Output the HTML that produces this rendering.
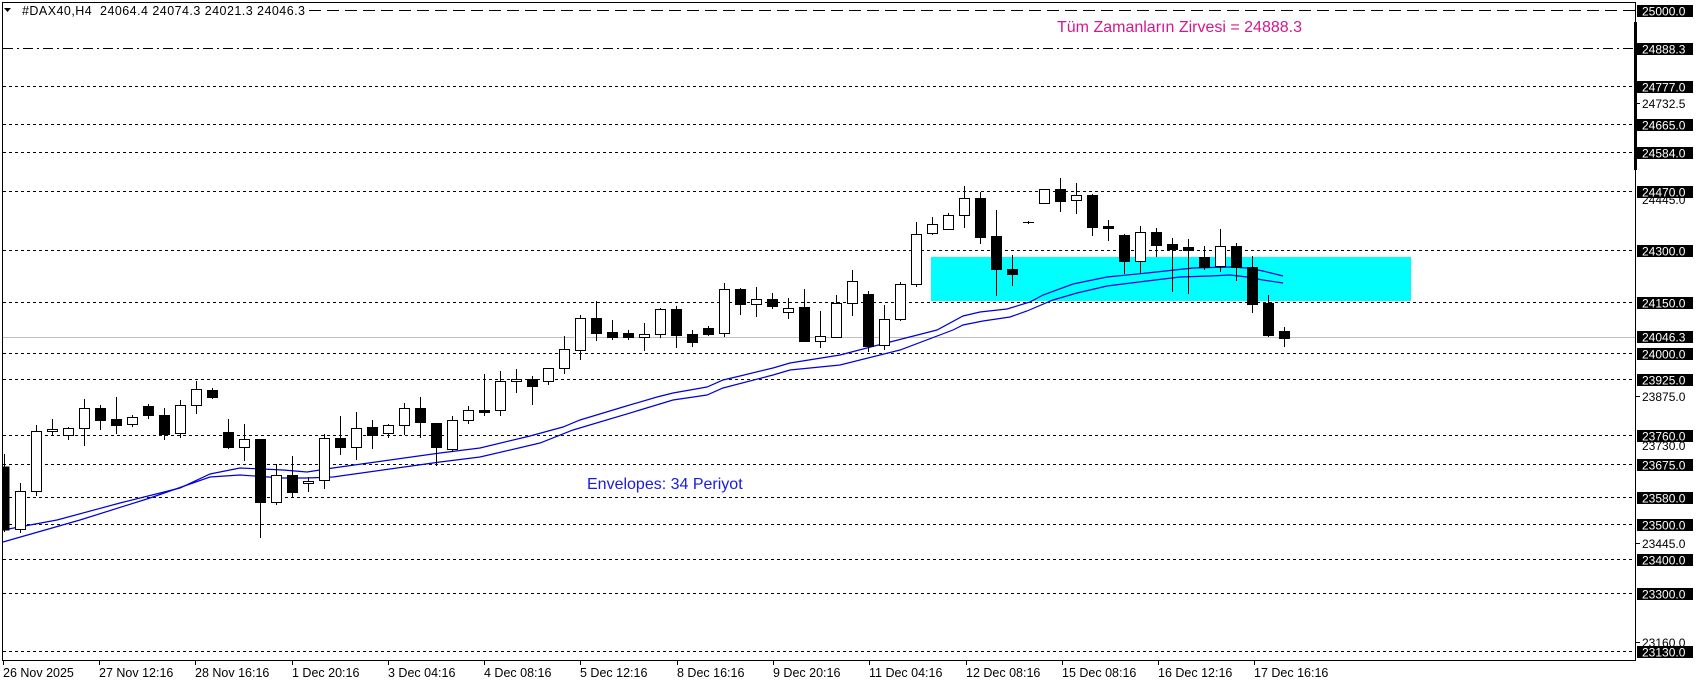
<!DOCTYPE html>
<html><head><meta charset="utf-8"><style>
html,body{margin:0;padding:0;background:#fff;width:1699px;height:684px;overflow:hidden}
svg{display:block}
text{font-family:"Liberation Sans",sans-serif}
</style></head><body>
<svg width="1699" height="684" viewBox="0 0 1699 684" xmlns="http://www.w3.org/2000/svg">
<rect x="0" y="0" width="1699" height="684" fill="#fff"/>
<rect x="931" y="257" width="480" height="44" fill="#00ffff"/>
<g shape-rendering="crispEdges" stroke="#000" stroke-width="1">
<line x1="3" y1="10.5" x2="1635" y2="10.5" stroke-dasharray="12,6"/>
<line x1="3" y1="48.5" x2="1635" y2="48.5" stroke-dasharray="10,4,2,4"/>
<g stroke-dasharray="3,3">
<line x1="3" y1="86.5" x2="1635" y2="86.5"/>
<line x1="3" y1="124.5" x2="1635" y2="124.5"/>
<line x1="3" y1="152.5" x2="1635" y2="152.5"/>
<line x1="3" y1="191.5" x2="1635" y2="191.5"/>
<line x1="3" y1="250.5" x2="1635" y2="250.5"/>
<line x1="3" y1="302.5" x2="1635" y2="302.5"/>
<line x1="3" y1="353.5" x2="1635" y2="353.5"/>
<line x1="3" y1="379.5" x2="1635" y2="379.5"/>
<line x1="3" y1="435.5" x2="1635" y2="435.5"/>
<line x1="3" y1="464.5" x2="1635" y2="464.5"/>
<line x1="3" y1="497.5" x2="1635" y2="497.5"/>
<line x1="3" y1="524.5" x2="1635" y2="524.5"/>
<line x1="3" y1="559.5" x2="1635" y2="559.5"/>
<line x1="3" y1="593.5" x2="1635" y2="593.5"/>
<line x1="3" y1="651.5" x2="1635" y2="651.5"/>
</g>
<line x1="3" y1="337.5" x2="1635" y2="337.5" stroke="#c0c0c0"/>
</g>
<g fill="none" stroke="#0000d8" stroke-width="1.2">
<polyline points="3,530 57,520 120,503 180,488 210,474 240,468 283,470 307,472 333,468 440,453 480,448 530,436 563,427 580,420 623,407 657,397 673,393 707,387 723,380 740,376 773,368 790,363 840,355 890,342 937,330 963,316 980,312 1007,309 1030,302 1043,295 1073,284 1107,277 1147,273 1193,268 1230,267 1247,268 1263,271 1283,276"/>
<polyline points="3,542 80,520 150,498 210,477 240,475 283,478 307,478 333,477 440,462 480,457 540,443 573,430 640,410 673,400 707,395 723,388 773,375 790,370 840,365 900,350 953,330 963,325 983,321 1010,317 1027,311 1053,300 1077,293 1107,286 1147,281 1180,277 1210,276 1230,275 1247,277 1263,280 1283,283"/>
</g>
<g shape-rendering="crispEdges" stroke="#000" stroke-width="1">
<line x1="4.5" y1="454" x2="4.5" y2="532"/><rect x="3" y="467" width="6" height="63" fill="#000"/>
<line x1="20.5" y1="483" x2="20.5" y2="533"/><rect x="15.5" y="491.5" width="10" height="38" fill="#fff"/>
<line x1="36.5" y1="425" x2="36.5" y2="496"/><rect x="31.5" y="431.5" width="10" height="60" fill="#fff"/>
<line x1="52.5" y1="419" x2="52.5" y2="436"/><rect x="47.5" y="429.5" width="10" height="2" fill="#fff"/>
<line x1="68.5" y1="427" x2="68.5" y2="440"/><rect x="63.5" y="428.5" width="10" height="7" fill="#fff"/>
<line x1="84.5" y1="399" x2="84.5" y2="446"/><rect x="79.5" y="408.5" width="10" height="20" fill="#fff"/>
<line x1="100.5" y1="405" x2="100.5" y2="430"/><rect x="95.5" y="408.5" width="10" height="12" fill="#000"/>
<line x1="116.5" y1="397" x2="116.5" y2="434"/><rect x="111.5" y="419.5" width="10" height="6" fill="#000"/>
<line x1="132.5" y1="415" x2="132.5" y2="427"/><rect x="127.5" y="417.5" width="10" height="7" fill="#fff"/>
<line x1="148.5" y1="404" x2="148.5" y2="419"/><rect x="143.5" y="406.5" width="10" height="9" fill="#000"/>
<line x1="164.5" y1="408" x2="164.5" y2="440"/><rect x="159.5" y="415.5" width="10" height="19" fill="#000"/>
<line x1="180.5" y1="400" x2="180.5" y2="438"/><rect x="175.5" y="405.5" width="10" height="28" fill="#fff"/>
<line x1="196.5" y1="381" x2="196.5" y2="414"/><rect x="191.5" y="389.5" width="10" height="16" fill="#fff"/>
<line x1="212.5" y1="388" x2="212.5" y2="399"/><rect x="207.5" y="390.5" width="10" height="7" fill="#000"/>
<line x1="228.5" y1="419" x2="228.5" y2="449"/><rect x="223.5" y="432.5" width="10" height="15" fill="#000"/>
<line x1="244.5" y1="424" x2="244.5" y2="461"/><rect x="239.5" y="439.5" width="10" height="8" fill="#fff"/>
<line x1="260.5" y1="439" x2="260.5" y2="538"/><rect x="255.5" y="439.5" width="10" height="63" fill="#000"/>
<line x1="276.5" y1="464" x2="276.5" y2="505"/><rect x="271.5" y="475.5" width="10" height="27" fill="#fff"/>
<line x1="292.5" y1="456" x2="292.5" y2="497"/><rect x="287.5" y="475.5" width="10" height="17" fill="#000"/>
<line x1="308.5" y1="477" x2="308.5" y2="492"/><rect x="303.5" y="481.5" width="10" height="2" fill="#fff"/>
<line x1="324.5" y1="434" x2="324.5" y2="489"/><rect x="319.5" y="438.5" width="10" height="42" fill="#fff"/>
<line x1="340.5" y1="416" x2="340.5" y2="455"/><rect x="335.5" y="438.5" width="10" height="9" fill="#000"/>
<line x1="356.5" y1="412" x2="356.5" y2="460"/><rect x="351.5" y="428.5" width="10" height="19" fill="#fff"/>
<line x1="372.5" y1="420" x2="372.5" y2="449"/><rect x="367.5" y="427.5" width="10" height="8" fill="#000"/>
<line x1="388.5" y1="424" x2="388.5" y2="438"/><rect x="383.5" y="425.5" width="10" height="8" fill="#fff"/>
<line x1="404.5" y1="403" x2="404.5" y2="435"/><rect x="399.5" y="408.5" width="10" height="17" fill="#fff"/>
<line x1="420.5" y1="397" x2="420.5" y2="438"/><rect x="415.5" y="408.5" width="10" height="14" fill="#000"/>
<line x1="436.5" y1="423" x2="436.5" y2="466"/><rect x="431.5" y="423.5" width="10" height="24" fill="#000"/>
<line x1="452.5" y1="416" x2="452.5" y2="452"/><rect x="447.5" y="420.5" width="10" height="29" fill="#fff"/>
<line x1="468.5" y1="406" x2="468.5" y2="424"/><rect x="463.5" y="410.5" width="10" height="10" fill="#fff"/>
<line x1="484.5" y1="374" x2="484.5" y2="416"/><rect x="479.5" y="410.5" width="10" height="2" fill="#000"/>
<line x1="500.5" y1="371" x2="500.5" y2="416"/><rect x="495.5" y="381.5" width="10" height="29" fill="#fff"/>
<line x1="516.5" y1="369" x2="516.5" y2="393"/><rect x="511.5" y="379.5" width="10" height="2" fill="#fff"/>
<line x1="532.5" y1="376" x2="532.5" y2="405"/><rect x="527.5" y="379.5" width="10" height="7" fill="#000"/>
<line x1="548.5" y1="368" x2="548.5" y2="385"/><rect x="543.5" y="368.5" width="10" height="13" fill="#fff"/>
<line x1="564.5" y1="336" x2="564.5" y2="374"/><rect x="559.5" y="349.5" width="10" height="19" fill="#fff"/>
<line x1="580.5" y1="315" x2="580.5" y2="360"/><rect x="575.5" y="318.5" width="10" height="32" fill="#fff"/>
<line x1="596.5" y1="301" x2="596.5" y2="341"/><rect x="591.5" y="318.5" width="10" height="15" fill="#000"/>
<line x1="612.5" y1="320" x2="612.5" y2="340"/><rect x="607.5" y="332.5" width="10" height="5" fill="#000"/>
<line x1="628.5" y1="330" x2="628.5" y2="340"/><rect x="623.5" y="333.5" width="10" height="4" fill="#000"/>
<line x1="644.5" y1="323" x2="644.5" y2="351"/><rect x="639.5" y="334.5" width="10" height="3" fill="#fff"/>
<line x1="660.5" y1="308" x2="660.5" y2="338"/><rect x="655.5" y="309.5" width="10" height="25" fill="#fff"/>
<line x1="676.5" y1="306" x2="676.5" y2="348"/><rect x="671.5" y="309.5" width="10" height="26" fill="#000"/>
<line x1="692.5" y1="330" x2="692.5" y2="347"/><rect x="687.5" y="334.5" width="10" height="8" fill="#000"/>
<line x1="708.5" y1="326" x2="708.5" y2="336"/><rect x="703.5" y="328.5" width="10" height="6" fill="#000"/>
<line x1="724.5" y1="283" x2="724.5" y2="337"/><rect x="719.5" y="289.5" width="10" height="44" fill="#fff"/>
<line x1="740.5" y1="288" x2="740.5" y2="315"/><rect x="735.5" y="289.5" width="10" height="15" fill="#000"/>
<line x1="756.5" y1="287" x2="756.5" y2="317"/><rect x="751.5" y="299.5" width="10" height="5" fill="#fff"/>
<line x1="772.5" y1="293" x2="772.5" y2="309"/><rect x="767.5" y="299.5" width="10" height="7" fill="#000"/>
<line x1="788.5" y1="298" x2="788.5" y2="319"/><rect x="783.5" y="308.5" width="10" height="4" fill="#fff"/>
<line x1="804.5" y1="289" x2="804.5" y2="342"/><rect x="799.5" y="307.5" width="10" height="34" fill="#000"/>
<line x1="820.5" y1="311" x2="820.5" y2="348"/><rect x="815.5" y="336.5" width="10" height="5" fill="#fff"/>
<line x1="836.5" y1="295" x2="836.5" y2="338"/><rect x="831.5" y="303.5" width="10" height="34" fill="#fff"/>
<line x1="852.5" y1="270" x2="852.5" y2="316"/><rect x="847.5" y="281.5" width="10" height="22" fill="#fff"/>
<line x1="868.5" y1="291" x2="868.5" y2="352"/><rect x="863.5" y="294.5" width="10" height="52" fill="#000"/>
<line x1="884.5" y1="305" x2="884.5" y2="350"/><rect x="879.5" y="319.5" width="10" height="26" fill="#fff"/>
<line x1="900.5" y1="282" x2="900.5" y2="321"/><rect x="895.5" y="284.5" width="10" height="35" fill="#fff"/>
<line x1="916.5" y1="222" x2="916.5" y2="287"/><rect x="911.5" y="234.5" width="10" height="50" fill="#fff"/>
<line x1="932.5" y1="217" x2="932.5" y2="235"/><rect x="927.5" y="224.5" width="10" height="9" fill="#fff"/>
<line x1="948.5" y1="213" x2="948.5" y2="230"/><rect x="943.5" y="215.5" width="10" height="14" fill="#fff"/>
<line x1="964.5" y1="186" x2="964.5" y2="228"/><rect x="959.5" y="198.5" width="10" height="17" fill="#fff"/>
<line x1="980.5" y1="192" x2="980.5" y2="244"/><rect x="975.5" y="198.5" width="10" height="39" fill="#000"/>
<line x1="996.5" y1="210" x2="996.5" y2="296"/><rect x="991.5" y="236.5" width="10" height="33" fill="#000"/>
<line x1="1012.5" y1="255" x2="1012.5" y2="286"/><rect x="1007.5" y="269.5" width="10" height="5" fill="#000"/>
<line x1="1023" y1="222.5" x2="1034" y2="222.5"/><line x1="1028.5" y1="221" x2="1028.5" y2="224"/>
<line x1="1044.5" y1="189" x2="1044.5" y2="203"/><rect x="1039.5" y="189.5" width="10" height="14" fill="#fff"/>
<line x1="1060.5" y1="178" x2="1060.5" y2="212"/><rect x="1055.5" y="189.5" width="10" height="12" fill="#000"/>
<line x1="1076.5" y1="183" x2="1076.5" y2="214"/><rect x="1071.5" y="195.5" width="10" height="5" fill="#fff"/>
<line x1="1092.5" y1="194" x2="1092.5" y2="236"/><rect x="1087.5" y="195.5" width="10" height="32" fill="#000"/>
<line x1="1108.5" y1="220" x2="1108.5" y2="241"/><rect x="1103.5" y="226.5" width="10" height="2" fill="#000"/>
<line x1="1124.5" y1="234" x2="1124.5" y2="274"/><rect x="1119.5" y="235.5" width="10" height="26" fill="#000"/>
<line x1="1140.5" y1="226" x2="1140.5" y2="274"/><rect x="1135.5" y="232.5" width="10" height="29" fill="#fff"/>
<line x1="1156.5" y1="228" x2="1156.5" y2="257"/><rect x="1151.5" y="232.5" width="10" height="13" fill="#000"/>
<line x1="1172.5" y1="238" x2="1172.5" y2="292"/><rect x="1167.5" y="244.5" width="10" height="5" fill="#000"/>
<line x1="1188.5" y1="239" x2="1188.5" y2="294"/><rect x="1183.5" y="247.5" width="10" height="3" fill="#000"/>
<line x1="1204.5" y1="246" x2="1204.5" y2="270"/><rect x="1199.5" y="257.5" width="10" height="10" fill="#000"/>
<line x1="1220.5" y1="229" x2="1220.5" y2="272"/><rect x="1215.5" y="246.5" width="10" height="20" fill="#fff"/>
<line x1="1236.5" y1="243" x2="1236.5" y2="281"/><rect x="1231.5" y="246.5" width="10" height="21" fill="#000"/>
<line x1="1252.5" y1="256" x2="1252.5" y2="313"/><rect x="1247.5" y="267.5" width="10" height="37" fill="#000"/>
<line x1="1268.5" y1="295" x2="1268.5" y2="337"/><rect x="1263.5" y="303.5" width="10" height="32" fill="#000"/>
<line x1="1284.5" y1="327" x2="1284.5" y2="347"/><rect x="1279.5" y="331.5" width="10" height="7" fill="#000"/>
</g>
<g shape-rendering="crispEdges" stroke="#000" stroke-width="1" fill="none">
<line x1="2.5" y1="2" x2="2.5" y2="661"/>
<line x1="2" y1="2.5" x2="1636" y2="2.5"/>
<line x1="1635.5" y1="2" x2="1635.5" y2="661"/>
<line x1="2" y1="660.5" x2="1636" y2="660.5"/>
</g>
<rect x="1634" y="22" width="3" height="148" fill="#000"/>
<rect x="3" y="4" width="304" height="13" fill="#fff"/>
<polygon points="4,8 11,8 7.5,12" fill="#000"/>
<text x="22" y="15" font-size="12.5" fill="#000" textLength="283" lengthAdjust="spacing" xml:space="preserve">#DAX40,H4  24064.4 24074.3 24021.3 24046.3</text>
<text x="1057" y="32" font-size="16" fill="#d4178e">Tüm Zamanların Zirvesi = 24888.3</text>
<text x="587" y="489" font-size="16" fill="#1a1ae0">Envelopes: 34 Periyot</text>
<g font-size="12" fill="#000" shape-rendering="crispEdges">
<line x1="1636" y1="103.5" x2="1640" y2="103.5" stroke="#000"/><text x="1642" y="108">24732.5</text>
<text x="1642" y="204">24445.0</text>
<line x1="1636" y1="396.5" x2="1640" y2="396.5" stroke="#000"/><text x="1642" y="401">23875.0</text>
<text x="1642" y="450">23730.0</text>
<line x1="1636" y1="543.5" x2="1640" y2="543.5" stroke="#000"/><text x="1642" y="548">23445.0</text>
<line x1="1636" y1="642.5" x2="1640" y2="642.5" stroke="#000"/><text x="1642" y="647">23160.0</text>
<text x="1642" y="306">24160.0</text>
</g>
<g font-size="12" shape-rendering="crispEdges">
<g fill="#000">
<rect x="1637" y="5" width="56" height="12"/>
<rect x="1637" y="43" width="56" height="12"/>
<rect x="1637" y="81" width="56" height="12"/>
<rect x="1637" y="119" width="56" height="12"/>
<rect x="1637" y="147" width="56" height="12"/>
<rect x="1637" y="186" width="56" height="12"/>
<rect x="1637" y="245" width="56" height="12"/>
<rect x="1637" y="297" width="56" height="12"/>
<rect x="1637" y="331" width="56" height="12"/>
<rect x="1637" y="348" width="56" height="12"/>
<rect x="1637" y="374" width="56" height="12"/>
<rect x="1637" y="430" width="56" height="12"/>
<rect x="1637" y="459" width="56" height="12"/>
<rect x="1637" y="492" width="56" height="12"/>
<rect x="1637" y="519" width="56" height="12"/>
<rect x="1637" y="554" width="56" height="12"/>
<rect x="1637" y="588" width="56" height="12"/>
<rect x="1637" y="646" width="56" height="12"/>
</g>
<g fill="#fff">
<text x="1642" y="15.5">25000.0</text>
<text x="1642" y="53.5">24888.3</text>
<text x="1642" y="91.5">24777.0</text>
<text x="1642" y="129.5">24665.0</text>
<text x="1642" y="157.5">24584.0</text>
<text x="1642" y="196.5">24470.0</text>
<text x="1642" y="255.5">24300.0</text>
<text x="1642" y="307.5">24150.0</text>
<text x="1642" y="341.5">24046.3</text>
<text x="1642" y="358.5">24000.0</text>
<text x="1642" y="384.5">23925.0</text>
<text x="1642" y="440.5">23760.0</text>
<text x="1642" y="469.5">23675.0</text>
<text x="1642" y="502.5">23580.0</text>
<text x="1642" y="529.5">23500.0</text>
<text x="1642" y="564.5">23400.0</text>
<text x="1642" y="598.5">23300.0</text>
<text x="1642" y="656.5">23130.0</text>
</g>
</g>
<g stroke="#000" shape-rendering="crispEdges">
<line x1="3.5" y1="661" x2="3.5" y2="665"/><line x1="99.5" y1="661" x2="99.5" y2="665"/><line x1="195.5" y1="661" x2="195.5" y2="665"/><line x1="292.5" y1="661" x2="292.5" y2="665"/><line x1="388.5" y1="661" x2="388.5" y2="665"/><line x1="484.5" y1="661" x2="484.5" y2="665"/><line x1="580.5" y1="661" x2="580.5" y2="665"/><line x1="677.5" y1="661" x2="677.5" y2="665"/><line x1="773.5" y1="661" x2="773.5" y2="665"/><line x1="869.5" y1="661" x2="869.5" y2="665"/><line x1="966.5" y1="661" x2="966.5" y2="665"/><line x1="1062.5" y1="661" x2="1062.5" y2="665"/><line x1="1158.5" y1="661" x2="1158.5" y2="665"/><line x1="1254.5" y1="661" x2="1254.5" y2="665"/>
</g>
<g font-size="12.5" fill="#000">
<text x="3" y="677">26 Nov 2025</text>
<text x="99" y="677">27 Nov 12:16</text>
<text x="195" y="677">28 Nov 16:16</text>
<text x="292" y="677">1 Dec 20:16</text>
<text x="388" y="677">3 Dec 04:16</text>
<text x="484" y="677">4 Dec 08:16</text>
<text x="580" y="677">5 Dec 12:16</text>
<text x="677" y="677">8 Dec 16:16</text>
<text x="773" y="677">9 Dec 20:16</text>
<text x="869" y="677">11 Dec 04:16</text>
<text x="966" y="677">12 Dec 08:16</text>
<text x="1062" y="677">15 Dec 08:16</text>
<text x="1158" y="677">16 Dec 12:16</text>
<text x="1254" y="677">17 Dec 16:16</text>
</g>
</svg>
</body></html>
